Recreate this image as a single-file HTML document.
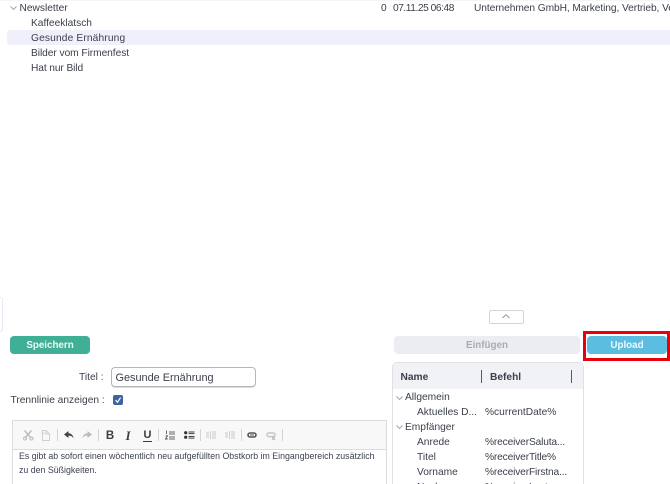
<!DOCTYPE html>
<html lang="de"><head><meta charset="utf-8"><title>Newsletter</title>
<style>
html,body{margin:0;padding:0;width:670px;height:484px;overflow:hidden;background:#fff}
body{font-family:"Liberation Sans",sans-serif;font-size:10.2px;color:#3a3f4a;position:relative}
.a{position:absolute;white-space:nowrap}
.t{line-height:14px;height:14px}
.btn{border-radius:4px;text-align:center;font-weight:bold;font-size:9.8px;line-height:19px;height:18px}
svg{position:absolute;overflow:visible}
.sep{position:absolute;width:1px;height:12px;top:429px;background:#d4d4d4}
.e{font-size:8.8px;line-height:14px;color:#3c4252}
</style></head><body>
<div class="a" style="left:0;top:0;width:670px;height:1px;background:#f5f5f8"></div>

<svg style="left:10px;top:6px" width="7" height="4"><path d="M0.5 0.5L3.5 3.5L6.5 0.5" fill="none" stroke="#9a9ea8" stroke-width=".9"/></svg>
<div class="a t" style="left:19.5px;top:2px">Newsletter</div>
<div class="a t" style="left:31px;top:17px">Kaffeeklatsch</div>
<div class="a" style="left:7px;top:30px;width:663px;height:15px;background:#f0f0fb;border-radius:3px 0 0 3px"></div>
<div class="a t" style="left:31px;top:32px;letter-spacing:.15px">Gesunde Ernährung</div>
<div class="a t" style="left:31px;top:47px;letter-spacing:-.05px">Bilder vom Firmenfest</div>
<div class="a t" style="left:31px;top:62px;letter-spacing:-.1px">Hat nur Bild</div>
<div class="a t" style="left:381px;top:2px">0</div>
<div class="a t" style="left:393px;top:2px;letter-spacing:-.45px">07.11.25 06:48</div>
<div class="a t" style="left:474px;top:2px;width:196px;overflow:hidden;letter-spacing:-.07px">Unternehmen GmbH, Marketing, Vertrieb, Verwaltung</div>

<div class="a" style="left:-4px;top:297px;width:5px;height:33px;border:1px solid #e6e8f5;border-radius:3px"></div>

<div class="a" style="left:488.5px;top:310px;width:33px;height:12px;border:1px solid #d5d5d8;border-radius:2px"></div>
<svg style="left:502px;top:314px" width="8" height="5"><path d="M0.5 4L4 0.7L7.5 4" fill="none" stroke="#8a8d94" stroke-width=".9"/></svg>

<div class="a btn" style="left:10px;top:336px;width:80px;background:#3fb095;color:#eef9f6">Speichern</div>
<div class="a btn" style="left:394px;top:336px;width:186px;background:#ecedf2;color:#a9abb2">Einfügen</div>
<div class="a btn" style="left:587px;top:336px;width:80px;background:#5bbde0;color:#f0fafd">Upload</div>
<div class="a" style="left:583px;top:331px;width:81px;height:24px;border:3px solid #e8000c"></div>

<div class="a t" style="left:79px;top:371px">Titel :</div>
<div class="a" style="left:110.5px;top:367px;width:143px;height:18px;border:1px solid #b5b6b8;border-radius:4px;box-shadow:0 1px 0 #ddd"></div>
<div class="a t" style="left:115.5px;top:370.5px;font-size:10.9px">Gesunde Ernährung</div>
<div class="a t" style="left:10.5px;top:394px">Trennlinie anzeigen :</div>
<div class="a" style="left:113px;top:395px;width:10px;height:10px;background:#3f63a3;border-radius:2px"></div>
<svg style="left:113px;top:395px" width="10" height="10"><path d="M2.6 5.2L4.4 7.3L7.6 2.6" fill="none" stroke="#fff" stroke-width="1.2"/></svg>

<!-- Variablen-Panel -->
<div class="a" style="left:392px;top:362px;width:190px;height:130px;border:1px solid #dfe1e6;border-radius:5px"></div>
<div class="a" style="left:393px;top:363px;width:190px;height:26px;background:#f1f2f6;border-radius:4px 4px 0 0"></div>
<div class="a t" style="left:400.5px;top:371px;font-weight:bold">Name</div>
<div class="a t" style="left:490px;top:371px;font-weight:bold">Befehl</div>
<div class="a" style="left:481px;top:370px;width:1px;height:13px;background:#555a62"></div>
<div class="a" style="left:571px;top:370px;width:1px;height:13px;background:#555a62"></div>

<svg style="left:395.5px;top:396px" width="7" height="4"><path d="M0.5 0.5L3.5 3.5L6.5 0.5" fill="none" stroke="#9a9ea8" stroke-width=".9"/></svg>
<div class="a t" style="left:405px;top:391px">Allgemein</div>
<div class="a t" style="left:417px;top:406px">Aktuelles D...</div>
<div class="a t" style="left:485px;top:406px">%currentDate%</div>
<svg style="left:395.5px;top:425px" width="7" height="4"><path d="M0.5 0.5L3.5 3.5L6.5 0.5" fill="none" stroke="#9a9ea8" stroke-width=".9"/></svg>
<div class="a t" style="left:405px;top:421px">Empfänger</div>
<div class="a t" style="left:417px;top:435.5px">Anrede</div>
<div class="a t" style="left:485px;top:435.5px;letter-spacing:-.15px">%receiverSaluta...</div>
<div class="a t" style="left:417px;top:451px">Titel</div>
<div class="a t" style="left:485px;top:451px;letter-spacing:-.15px">%receiverTitle%</div>
<div class="a t" style="left:417px;top:466px">Vorname</div>
<div class="a t" style="left:485px;top:466px;letter-spacing:-.15px">%receiverFirstna...</div>
<div class="a t" style="left:417px;top:481px">Nachname</div>
<div class="a t" style="left:485px;top:481px;letter-spacing:-.15px">%receiverLastna...</div>

<!-- Editor -->
<div class="a" style="left:12px;top:420px;width:373px;height:70px;border:1px solid #dcdcdc"></div>
<div class="a" style="left:13px;top:421px;width:373px;height:28px;background:#f8f8f8;border-bottom:1px solid #dcdcdc"></div>

<svg style="left:23px;top:430px" width="11" height="10"><path d="M1.5 .5L8 8M8.5 .5L2 8" stroke="#bcbcbc" stroke-width="1.5" fill="none"/><circle cx="2" cy="8.5" r="1.5" fill="none" stroke="#bcbcbc"/><circle cx="8.5" cy="8.5" r="1.5" fill="none" stroke="#bcbcbc"/></svg>
<svg style="left:41px;top:430px" width="10" height="11"><path d="M1.5.5H5L8.5 4V10.5H1.5Z" fill="#f8f8f8" stroke="#d0d0d0"/><path d="M3.5 3H.5M5 .5V4H8.5" stroke="#d0d0d0" fill="none"/></svg>
<div class="sep" style="left:57px"></div>
<svg style="left:64px;top:431px" width="10" height="8"><path d="M4.5 0L0 3.5L4.5 7V4.6C7 4.6 8.4 5.4 9.5 7.5C9.3 4.4 7.4 2.4 4.5 2.3Z" fill="#444"/></svg>
<svg style="left:82px;top:431px" width="10" height="8"><path d="M5.5 0L10 3.5L5.5 7V4.6C3 4.6 1.6 5.4 .5 7.5C.7 4.4 2.6 2.4 5.5 2.3Z" fill="#bcbcbc"/></svg>
<div class="sep" style="left:98px"></div>
<div class="a" style="left:105px;top:429px;width:10px;text-align:center;font-weight:bold;font-size:11.5px;line-height:14px;color:#3c3c3c">B</div>
<div class="a" style="left:123px;top:429px;width:10px;text-align:center;font-weight:bold;font-style:italic;font-family:'Liberation Serif',serif;font-size:12.5px;line-height:14px;color:#3c3c3c">I</div>
<div class="a" style="left:143px;top:428px;width:9px;text-align:center;font-weight:bold;font-size:11px;line-height:14px;color:#3c3c3c;border-bottom:1px solid #3c3c3c;height:12.5px">U</div>
<div class="sep" style="left:158px"></div>
<svg style="left:165px;top:430px" width="10" height="10"><path d="M1.5 .5V4M.5 5.8H2.5L.5 9H2.8" stroke="#555" fill="none" stroke-width=".9"/><path d="M4 2H10M4 4H10M4 7H10M4 9H10" stroke="#666" stroke-width="1"/></svg>
<svg style="left:184px;top:431px" width="11" height="8"><circle cx="1.7" cy="1.7" r="1.6" fill="#333"/><circle cx="1.7" cy="6.2" r="1.6" fill="#333"/><path d="M4.5 1H10.5M4.5 2.6H10.5M4.5 5.5H10.5M4.5 7.1H10.5" stroke="#444"/></svg>
<div class="sep" style="left:200px"></div>
<svg style="left:206px;top:431px" width="10" height="8"><path d="M4.5 0V8M0 2H3M0 4H3M0 6H3M6 1H10M6 3H10M6 5H10M6 7H10" stroke="#cacaca" fill="none" stroke-width=".9"/></svg>
<svg style="left:225px;top:431px" width="10" height="8"><path d="M4.5 0V8M0 2H3M0 4H3M0 6H3M6 1H10M6 3H10M6 5H10M6 7H10" stroke="#cacaca" fill="none" stroke-width=".9"/></svg>
<div class="sep" style="left:241px"></div>
<svg style="left:247px;top:432px" width="10" height="6"><rect x="1" y="1" width="8" height="4" rx="2" fill="none" stroke="#555" stroke-width="1.6"/><path d="M3 3H7" stroke="#555"/></svg>
<svg style="left:266px;top:432px" width="10" height="8"><rect x="1" y="1" width="8" height="3.6" rx="1.8" fill="none" stroke="#c6c6c6" stroke-width="1.5"/><path d="M6 5L9 8M9 5L6 8" stroke="#b8b8b8"/></svg>
<div class="sep" style="left:282px"></div>

<div class="a e" style="left:19px;top:449px">Es gibt ab sofort einen wöchentlich neu aufgefüllten Obstkorb im Eingangbereich zusätzlich</div>
<div class="a e" style="left:19px;top:463px">zu den Süßigkeiten.</div>
</body></html>
